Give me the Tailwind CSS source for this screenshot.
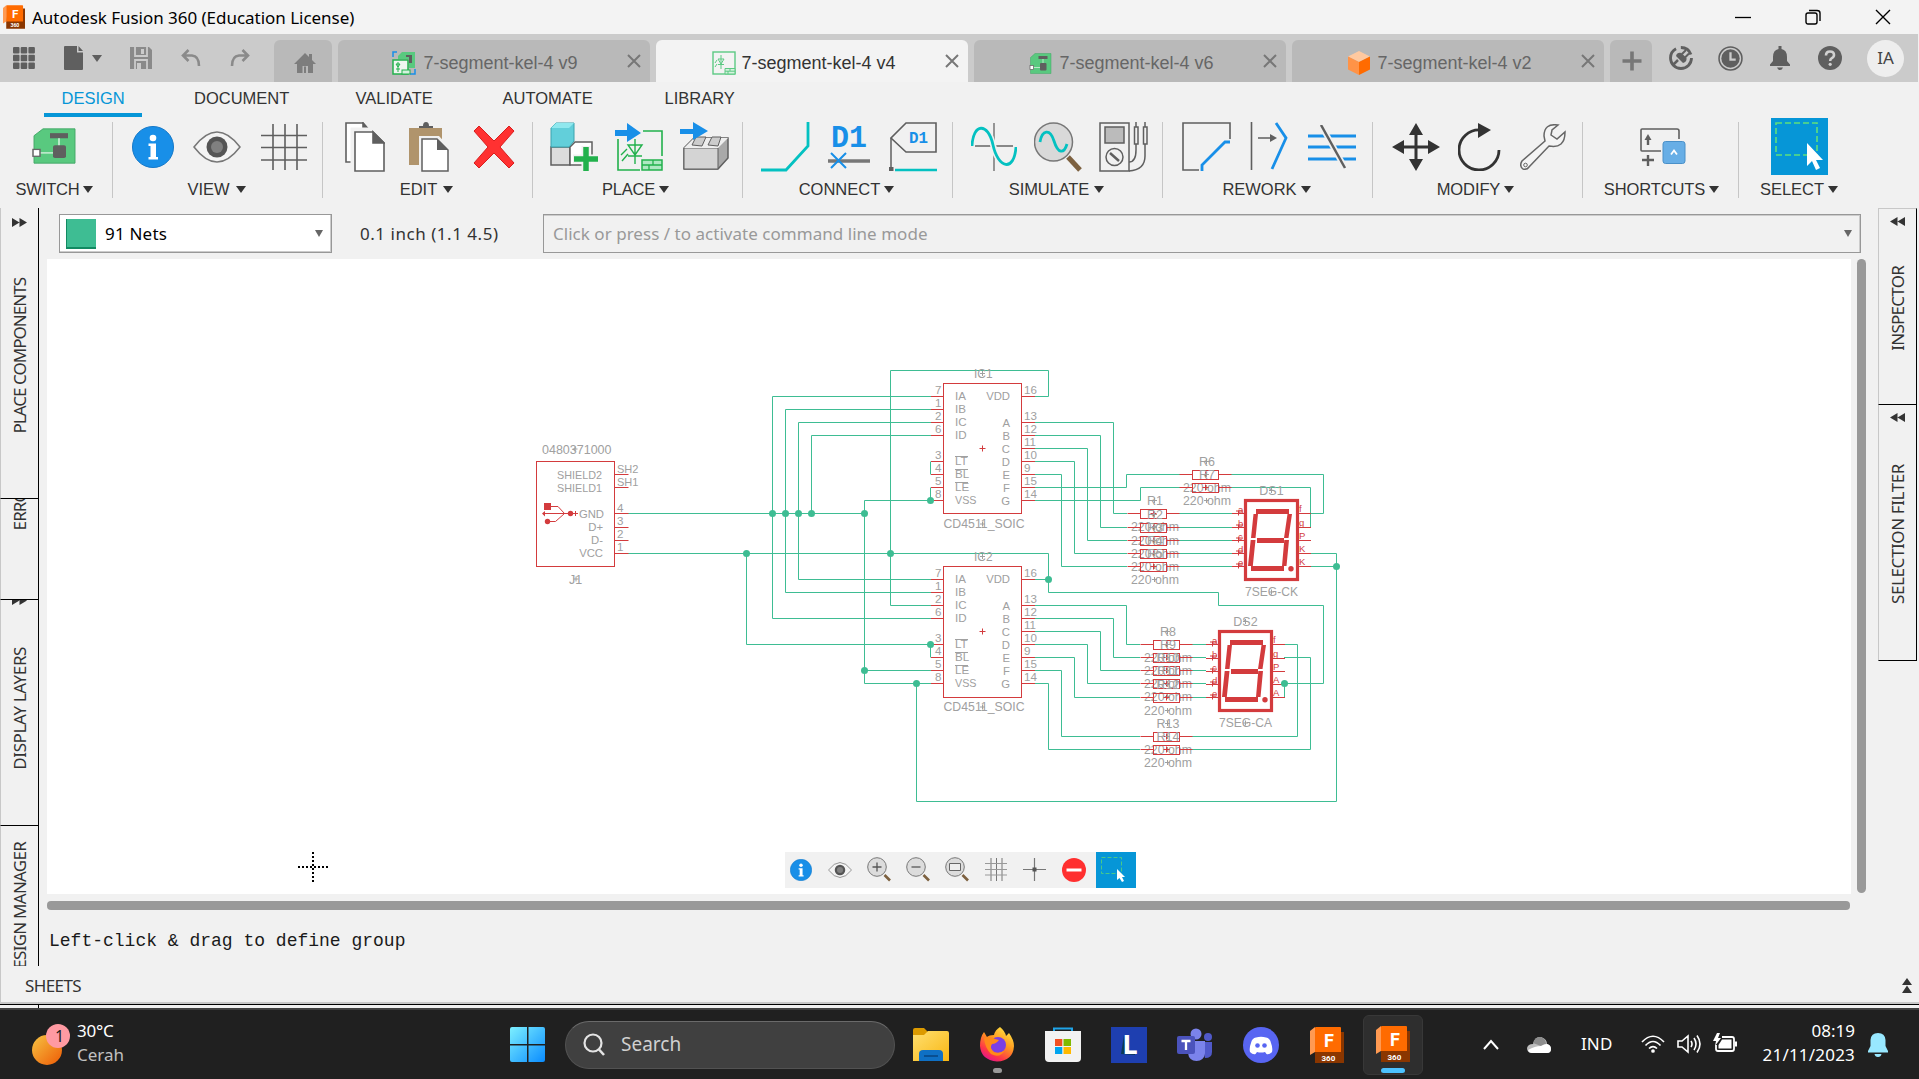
<!DOCTYPE html>
<html lang="en">
<head>
<meta charset="utf-8">
<title>Autodesk Fusion 360 (Education License)</title>
<script src="https://cdn.jsdelivr.net/npm/@tailwindcss/browser@4"></script>
</head>
<body class="w-[1919px] h-[1079px] overflow-hidden bg-[#f1f1f1] font-['Noto_Sans',sans-serif] text-[#333] flex flex-col">

<svg class="absolute w-0 h-0">
  <defs>
    <linearGradient id="winG" x1="0" y1="0" x2="1" y2="1"><stop offset="0" stop-color="#7df0ff"/><stop offset="1" stop-color="#0a8cff"/></linearGradient>
    <linearGradient id="sunG" x1="0" y1="0" x2="1" y2="1"><stop offset="0" stop-color="#f6c443"/><stop offset="1" stop-color="#ee5a05"/></linearGradient>
    <linearGradient id="folG" x1="0" y1="0" x2="1" y2="1"><stop offset="0" stop-color="#ffdf70"/><stop offset="1" stop-color="#f9b713"/></linearGradient>
    <linearGradient id="foxG" x1="0.9" y1="0" x2="0.3" y2="1"><stop offset="0" stop-color="#fff04a"/><stop offset=".45" stop-color="#ff9a1f"/><stop offset=".8" stop-color="#ff3647"/><stop offset="1" stop-color="#e3158c"/></linearGradient>
  </defs>
  <symbol id="fusion" viewBox="0 0 34 36">
    <path d="M8 5H34V36H5V26z" fill="#8a3600"/><path d="M0 4L5 0V25L0 28z" fill="#ff9a52"/><path d="M5 1Q5 0 6 0H30Q31 0 31 1V25H5z" fill="#ff6b00"/>
    <text x="14" y="20" font-family="Roboto" font-weight="700" font-size="18" fill="#fff">F</text>
    <text x="11.500" y="33.500" font-family="Roboto" font-weight="700" font-size="8" fill="#fff">360</text>
  </symbol>
  <symbol id="board" viewBox="0 0 44 42">
    <path d="M2 9L11 1H43V41H2z" fill="#59c97f" stroke="#43a667"/><path d="M18 6H36V12H18z" fill="#5f5f5f"/><path d="M27 12V22M8 29H22" stroke="#b8e8c8" stroke-width="2"/><rect x="21" y="20" width="13" height="15" rx="2" fill="#5f5f5f"/><rect x="1" y="25" width="7" height="8" fill="#fff" stroke="#666" stroke-width="1.500"/>
  </symbol>
  <symbol id="sch" viewBox="0 0 24 24">
    <rect x="1" y="1" width="22" height="22" fill="none" stroke="#5cc983" stroke-width="1.400"/><path d="M9 4V18M6 8H12L9 13zM6 13.500H12M5 9L3 12M5 13L3 16" stroke="#5cc983" fill="none"/><path d="M13 17.500H23V23H13z" fill="#d5f2de" stroke="#5cc983"/><path d="M13 20.200H23M18 17V20M16 20V23" stroke="#5cc983"/>
  </symbol>
  <symbol id="eye" viewBox="0 0 48 32">
    <path d="M1 16Q24 -14 47 16Q24 46 1 16z" fill="#f4f4f4" stroke="#777" stroke-width="1.500"/><circle cx="24" cy="16" r="10.500" fill="#555"/><circle cx="24" cy="16" r="6" fill="#808080"/>
  </symbol>
  <symbol id="grid3" viewBox="0 0 46 46">
    <path d="M12 0V46M24 0V46M36 0V46M0 11.500H46M0 23.500H46M0 36H46" stroke="#5f5f5f" stroke-width="1.600"/>
  </symbol>
  <symbol id="lens" viewBox="0 0 24 25">
    <path d="M17.500 18L23 23.500" stroke="#7d6140" stroke-width="2.600"/><circle cx="10" cy="10" r="9.300" fill="#dcdcdc" stroke="#777"/>
  </symbol>
  <symbol id="info" viewBox="0 0 42 42">
    <circle cx="21" cy="21" r="20.500" fill="#188fe8" stroke="#1478c8"/><circle cx="21" cy="12" r="3.300" fill="#fff"/><path d="M16.500 17.500H24V31H26V33.500H16.500V31H18.500V20H16.500z" fill="#fff"/>
  </symbol>
  <symbol id="x" viewBox="0 0 14 14"><path d="M1 1L13 13M13 1L1 13" stroke="#777" stroke-width="2"/></symbol>
  <symbol id="dn" viewBox="0 0 10 7"><path d="M0 0H10L5 7z" fill="currentColor"/></symbol>
  <symbol id="ff" viewBox="0 0 15 9"><path d="M0 0L7.500 4.500L0 9zM7.500 0L15 4.500L7.500 9z" fill="#333"/></symbol>
</svg>

<!-- title bar -->
<header class="h-[34px] shrink-0 bg-[#f3f3f3] flex items-center pl-[3px] text-black">
  <svg class="w-[22px] h-6"><use href="#fusion"/></svg>
  <span class="ml-[7px] text-[17px] leading-none tracking-[-0.03px]">Autodesk Fusion 360 (Education License)</span>
  <div class="ml-auto flex items-center gap-[54px] pr-[28px]">
    <svg class="w-4 h-4" viewBox="0 0 16 16"><path d="M0 8.500H16" stroke="#000" stroke-width="1.300"/></svg>
    <svg class="w-4 h-4" viewBox="0 0 16 16" fill="none" stroke="#000" stroke-width="1.400"><rect x="1" y="4" width="11" height="11" rx="2"/><path d="M4 1.500H12Q15 1.500 15 4V12"/></svg>
    <svg class="w-4 h-4" viewBox="0 0 16 16"><path d="M1 1L15 15M15 1L1 15" stroke="#000" stroke-width="1.400"/></svg>
  </div>
</header>

<!-- document tabs -->
<div class="h-12 shrink-0 w-[1918px] bg-[#cbcbcb] flex items-end text-[18px] text-[#666] font-['Liberation_Sans',sans-serif]">
  <div class="w-[273.500px] h-full flex items-center pl-[13px]">
    <svg class="w-[22px] h-[22px]" viewBox="0 0 22 22" fill="#5f5f5f"><rect width="6.500" height="6.500" rx="1"/><rect x="7.700" width="6.500" height="6.500" rx="1"/><rect x="15.400" width="6.500" height="6.500" rx="1"/><rect y="7.700" width="6.500" height="6.500" rx="1"/><rect x="7.700" y="7.700" width="6.500" height="6.500" rx="1"/><rect x="15.400" y="7.700" width="6.500" height="6.500" rx="1"/><rect y="15.400" width="6.500" height="6.500" rx="1"/><rect x="7.700" y="15.400" width="6.500" height="6.500" rx="1"/><rect x="15.400" y="15.400" width="6.500" height="6.500" rx="1"/></svg>
    <svg class="w-5 h-6 ml-[29px]" viewBox="0 0 20 24"><path d="M0 1Q0 0 1 0H13V6.500H19V23Q19 24 18 24H1Q0 24 0 23zM14.500 0L19 5H14.500z" fill="#5f5f5f"/></svg>
    <svg class="w-2.5 h-[7px] ml-2 text-[#5f5f5f]"><use href="#dn"/></svg>
    <svg class="w-[22px] h-[22px] ml-7" viewBox="0 0 22 22"><path d="M0 0H19L22 3V22H0z" fill="#8a8a8a"/><path d="M5 0V9H17V0M5 22V13H17V22" fill="none" stroke="#cbcbcb" stroke-width="1.800"/><path d="M11 2H14V7H11zM7 16H11V22H7z" fill="#cbcbcb"/></svg>
    <svg class="w-5 h-[18px] ml-[29px]" viewBox="0 0 20 18" fill="none" stroke="#8a8a8a" stroke-width="2.600"><path d="M7.500 1L2 6.500L7.500 12M2 6.500H11Q18 7 18 17"/></svg>
    <svg class="w-5 h-[18px] ml-[29px]" viewBox="0 0 20 18" fill="none" stroke="#8a8a8a" stroke-width="2.600"><path d="M12.500 1L18 6.500L12.500 12M18 6.500H9Q2 7 2 17"/></svg>
  </div>
  <div class="w-[58px] h-[42px] bg-[#b9b9b9] rounded-t-md flex items-center justify-center pl-1 pt-1">
    <svg class="w-[22px] h-5" viewBox="0 0 22 20"><path d="M0 11L11 0L15 4V1H18V7L22 11H19V20H14V13H8.500V20H3V11z" fill="#7d7d7d"/><path d="M10 13.500H12V20H10z" fill="#7d7d7d"/></svg>
  </div>
  <div class="w-[312px] h-[42px] ml-[6px] bg-[#b9b9b9] rounded-t-md flex items-center pl-[54px] pt-1">
    <svg class="w-6 h-6" viewBox="0 0 24 24"><path d="M6 5L10 1H23V17H17V8H6z" fill="#59c97f"/><path d="M14 4H20V12H17V6H14z" fill="#5f5f5f"/><path d="M1 6V1H5M18 23H23V18" stroke="#188fe8" stroke-width="1.500" fill="none"/><rect x="1" y="9" width="15" height="14" fill="#eef6f0" stroke="#22b14c" stroke-width="1.500"/><path d="M6 11V21M4 13H8L6 16zM4 18H8" stroke="#22b14c" fill="none"/><rect x="10" y="19" width="8" height="4" fill="#d5f2de" stroke="#22b14c"/></svg>
    <span class="ml-[8px] w-[203px]">7-segment-kel-4 v9</span><svg class="w-3.5 h-3.5 mb-1"><use href="#x"/></svg>
  </div>
  <div class="w-[312px] h-[42px] ml-[6px] bg-[#f3f3f3] text-[#333] rounded-t-md flex items-center pl-[56px] pt-1">
    <svg class="w-6 h-6"><use href="#sch"/></svg>
    <span class="ml-[6px] w-[203px]">7-segment-kel-4 v4</span><svg class="w-3.5 h-3.5 mb-1"><use href="#x"/></svg>
  </div>
  <div class="w-[312px] h-[42px] ml-[6px] bg-[#b9b9b9] rounded-t-md flex items-center pl-[55px] pt-1">
    <svg class="w-[23px] h-[21px]"><use href="#board"/></svg>
    <span class="ml-[8px] w-[203px]">7-segment-kel-4 v6</span><svg class="w-3.5 h-3.5 mb-1"><use href="#x"/></svg>
  </div>
  <div class="w-[312px] h-[42px] ml-[6px] bg-[#b9b9b9] rounded-t-md flex items-center pl-[56px] pt-1">
    <svg class="w-[22px] h-6" viewBox="0 0 22 24"><path d="M11 0L22 5.500L11 11L0 5.500z" fill="#ffc9a0"/><path d="M0 5.500L11 11V24L0 18.500z" fill="#ff9347"/><path d="M22 5.500L11 11V24L22 18.500z" fill="#ff6b00"/></svg>
    <span class="ml-[8px] w-[203px]">7-segment-kel-4 v2</span><svg class="w-3.5 h-3.5 mb-1"><use href="#x"/></svg>
  </div>
  <div class="w-[42px] h-[42px] ml-[6px] bg-[#b9b9b9] rounded-t-md flex items-center justify-center pl-0.5">
    <svg class="w-5 h-5" viewBox="0 0 20 20"><path d="M10 0.500V19.500M0.500 10H19.500" stroke="#777" stroke-width="3.600"/></svg>
  </div>
  <div class="h-full flex items-center ml-[17.500px] gap-[25px]">
    <svg class="w-6 h-6" viewBox="0 0 24 24"><circle cx="12" cy="12" r="10.500" fill="none" stroke="#5f5f5f" stroke-width="2.800" stroke-dasharray="44 5 13 4"/><path d="M4 19L9 14" stroke="#5f5f5f" stroke-width="2.500"/><path d="M7 10L14 17Q18 16 17.500 12L12.500 7Q8 6 7 10z" fill="#5f5f5f"/><path d="M13 8L17 4M16 11.500L20 7.500" stroke="#5f5f5f" stroke-width="2"/></svg>
    <svg class="w-[25px] h-[25px]" viewBox="0 0 24 24"><circle cx="12" cy="12" r="11" fill="none" stroke="#5f5f5f" stroke-width="1.500"/><circle cx="12" cy="12" r="8.800" fill="#5f5f5f"/><path d="M12 6V13H17" stroke="#cbcbcb" stroke-width="2.200" fill="none"/></svg>
    <svg class="w-6 h-6" viewBox="0 0 24 24" fill="#5f5f5f"><path d="M10.500 0H13.500V3Q19 4 19 11V15L22 18.500V20H2V18.500L5 15V11Q5 4 10.500 3zM9 21.500H15Q14 24 12 24T9 21.500z"/></svg>
    <svg class="w-6 h-6 ml-px" viewBox="0 0 24 24"><circle cx="12" cy="12" r="12" fill="#5f5f5f"/><path d="M8 9.500Q8 5.500 12 5.500T16 9Q16 11 13.500 12.300Q12.200 13 12.200 15" stroke="#d2d2d2" stroke-width="2.600" fill="none"/><circle cx="12.200" cy="18.300" r="1.600" fill="#d2d2d2"/></svg>
    <div class="w-[37px] h-[37px] rounded-full bg-[#eeeeee] text-[#444] text-[17px] flex items-center justify-center font-['Noto_Sans',sans-serif]">IA</div>
  </div>
</div>

<!-- workspace menu -->
<nav class="h-[35px] shrink-0 flex text-[16.5px] font-['Liberation_Sans',sans-serif] pl-11 leading-[33px]">
  <div class="w-[98px] pl-[17.500px] text-[#0696d7] border-b-4 border-[#0696d7]">DESIGN</div>
  <div class="w-[162px] pl-[52px]">DOCUMENT</div>
  <div class="w-[146px] pl-[51.500px]">VALIDATE</div>
  <div class="w-[163px] pl-[52.500px]">AUTOMATE</div>
  <div class="pl-[51.500px]">LIBRARY</div>
</nav>

<!-- toolbar ribbon -->
<div class="h-[91px] shrink-0 flex pt-[1px] text-[16.5px] font-['Liberation_Sans',sans-serif] leading-none">
  <section class="w-[112px] flex flex-col items-center">
    <div class="h-[57px] flex items-center pb-px pr-1"><svg class="w-[44px] h-[36px]" viewBox="0 0 44 42" preserveAspectRatio="none"><use href="#board" width="44" height="42"/></svg></div>
    <div class="flex items-center gap-1 mt-[6px] pr-[3px] tracking-[-0.2px]">SWITCH<svg class="w-2.5 h-[7px]"><use href="#dn"/></svg></div>
  </section>
  <i class="w-px h-[76px] mt-1 bg-[#c6c6c6]"></i>
  <section class="w-[209px] flex flex-col items-center">
    <div class="h-[57px] flex items-center justify-around w-[194px] ml-1">
      <svg class="w-[42px] h-[42px]"><use href="#info"/></svg>
      <svg class="w-[48px] h-8"><use href="#eye"/></svg>
      <svg class="w-[46px] h-[46px]"><use href="#grid3"/></svg>
    </div>
    <div class="flex items-center gap-1.5 mt-[6px] pr-0.5">VIEW<svg class="w-2.5 h-[7px]"><use href="#dn"/></svg></div>
  </section>
  <i class="w-px h-[76px] mt-1 bg-[#c6c6c6]"></i>
  <section class="w-[209px] flex flex-col items-center">
    <div class="h-[57px] flex items-center justify-around w-[194px] ml-1">
      <svg class="w-[40px] h-[50px]" viewBox="0 0 40 50" fill="#fff" stroke="#5f5f5f" stroke-width="1.600"><path d="M1 1H18L24 8V40H1z"/><path d="M18 1V8H24z" fill="#5f5f5f"/><path d="M8 8H28L39 21V49H8z" stroke="#f1f1f1" stroke-width="5"/><path d="M10 10H28L39 21V49H10z"/><path d="M28 10V21H39z" fill="#5f5f5f"/></svg>
      <svg class="w-[40px] h-[50px]" viewBox="0 0 40 50"><path d="M0 6H33V43H0z" fill="#b0946c"/><path d="M10 6V4H14Q14 0 17 0T20 4H24V6z" fill="#5f5f5f"/><path d="M10 14H30L40 25V50H10z" fill="#f1f1f1"/><path d="M13 17H28L39 28V49H13z" fill="#fff" stroke="#5f5f5f" stroke-width="1.500"/><path d="M28 17V28H39z" fill="#5f5f5f"/></svg>
      <svg class="w-[42px] h-[44px]" viewBox="0 0 42 44"><path d="M6 1L21 16L36 1L41 6L27 22L41 38L36 43L21 28L6 43L1 38L15 22L1 6z" fill="#ff3131" stroke="#d81e1e"/></svg>
    </div>
    <div class="flex items-center gap-1.5 mt-[6px] pr-0.5">EDIT<svg class="w-2.5 h-[7px]"><use href="#dn"/></svg></div>
  </section>
  <i class="w-px h-[76px] mt-1 bg-[#c6c6c6]"></i>
  <section class="w-[209px] flex flex-col items-center">
    <div class="h-[57px] flex items-center justify-around w-[194px] ml-1">
      <svg class="w-[49px] h-[50px]" viewBox="0 0 49 50"><path d="M1 25H20V43H1z" fill="#dcdcdc" stroke="#5f5f5f" stroke-width="1.500"/><path d="M20 25L25 20H42V38L37 43H20z" fill="#fff" stroke="#5f5f5f" stroke-width="1.500"/><path d="M1 6L6 1H24V19L19 25H1z" fill="#62cfda" stroke="#3aa3ae"/><path d="M1 6L6 1H24L19 6z" fill="#90e8ee"/><path d="M36 24V50M23 37H49" stroke="#f1f1f1" stroke-width="9"/><path d="M36 25V49M24 37H48" stroke="#22b14c" stroke-width="5.500"/></svg>
      <svg class="w-[49px] h-[50px]" viewBox="0 0 49 50"><path d="M3 17V48H25M28 9H47V34" stroke="#22b14c" stroke-width="1.600" fill="none"/><path d="M20 17V42M13 23H27L20 33zM13 34H27M6 33L12 27M7 39L13 32" stroke="#22b14c" stroke-width="1.400" fill="none"/><rect x="27" y="38" width="20" height="10" fill="#aee8c2" stroke="#22b14c" stroke-width="1.500"/><path d="M27 43H47M38 38V43M34 43V48" stroke="#22b14c" stroke-width="1.300"/><path d="M0 8H12V1L26 11L12 20V14H0z" fill="#188fe8"/></svg>
      <svg class="w-[49px] h-[50px]" viewBox="0 0 49 50"><path d="M4 26L14 16H48V36L38 47H4z" fill="#a9a9a9" stroke="#5f5f5f" stroke-width="1.500"/><path d="M4 26H38V47H4z" fill="#d4d4d4" stroke="#5f5f5f" stroke-width="1"/><path d="M38 26L48 16H14L4 26z" fill="#eee"/><path d="M12 23L16 15H26L22 24zM28 23L32 15H41L38 24z" fill="#ccc" stroke="#5f5f5f"/><path d="M0 7H13V0L28 9L13 18V12H0z" fill="#188fe8"/></svg>
    </div>
    <div class="flex items-center gap-1 mt-[6px] pr-1 tracking-[-0.2px]">PLACE<svg class="w-2.5 h-[7px]"><use href="#dn"/></svg></div>
  </section>
  <i class="w-px h-[76px] mt-1 bg-[#c6c6c6]"></i>
  <section class="w-[209px] flex flex-col items-center">
    <div class="h-[57px] flex items-center justify-around w-[194px] ml-1">
      <svg class="w-[49px] h-[50px]" viewBox="0 0 49 50"><path d="M0 48H25L47 24V0" stroke="#04c1c1" stroke-width="2.800" fill="none"/></svg>
      <svg class="w-[43px] h-[50px]" viewBox="0 0 43 50"><text x="3" y="25" textLength="36" lengthAdjust="spacingAndGlyphs" font-family="Liberation Mono" font-weight="700" font-size="31" fill="#188fe8">D1</text><path d="M0 39H42" stroke="#777" stroke-width="3.500"/><path d="M3 31L18 46M18 31L3 46" stroke="#188fe8" stroke-width="2"/></svg>
      <svg class="w-[49px] h-[50px]" viewBox="0 0 49 50"><path d="M17 1H47V30H17L2 16z" fill="#f1f1f1" stroke="#5f5f5f" stroke-width="1.600"/><path d="M2 16V45" stroke="#5f5f5f" stroke-width="1.500"/><path d="M0 45H4.500V49H0z" fill="#5f5f5f"/><path d="M6 48H48" stroke="#04c1c1" stroke-width="2.600"/><text x="20" y="21" textLength="19" lengthAdjust="spacingAndGlyphs" font-family="Liberation Mono" font-weight="700" font-size="17" fill="#188fe8">D1</text></svg>
    </div>
    <div class="flex items-center gap-1 mt-[6px] pr-0.5">CONNECT<svg class="w-2.5 h-[7px]"><use href="#dn"/></svg></div>
  </section>
  <i class="w-px h-[76px] mt-1 bg-[#c6c6c6]"></i>
  <section class="w-[209px] flex flex-col items-center">
    <div class="h-[57px] flex items-center justify-around w-[194px] ml-1">
      <svg class="w-[46px] h-[48px]" viewBox="0 0 46 48" fill="none"><path d="M23 0V48M4 23H42" stroke="#666" stroke-width="1.300"/><path d="M1 23C2 0 17 -1 22 22S43 50 45 24" stroke="#f1f1f1" stroke-width="6"/><path d="M1 23C2 0 17 -1 22 22S43 50 45 24" stroke="#04c1c1" stroke-width="2.800"/></svg>
      <svg class="w-[48px] h-[50px]" viewBox="0 0 48 50"><path d="M34 35L46 48" stroke="#7d6140" stroke-width="5"/><circle cx="19.500" cy="20" r="19" fill="#d9d9d9" stroke="#777" stroke-width="1.500"/><path d="M6 20C8 8 16 6 20 19S30 32 33 22" stroke="#04c1c1" stroke-width="2.800" fill="none"/></svg>
      <svg class="w-[49px] h-[50px]" viewBox="0 0 49 50" fill="none" stroke="#5f5f5f" stroke-width="1.500"><rect x="1" y="1" width="29" height="48"/><rect x="6" y="5" width="19" height="16" fill="#bbb"/><circle cx="15.500" cy="35" r="8.500"/><path d="M11 31L20 39" stroke-width="2.500"/><path d="M37 0V5M46 0V5M35.500 5H39V22H35.500zM44.500 5H48V22H44.500zM37 22V28Q37 40 30 40M46 22V34Q46 48 30 49"/></svg>
    </div>
    <div class="flex items-center gap-[5px] mt-[6px] pr-0.5 tracking-[-0.1px]">SIMULATE<svg class="w-2.5 h-[7px]"><use href="#dn"/></svg></div>
  </section>
  <i class="w-px h-[76px] mt-1 bg-[#c6c6c6]"></i>
  <section class="w-[209px] flex flex-col items-center">
    <div class="h-[57px] flex items-center justify-around w-[194px] ml-1">
      <svg class="w-[49px] h-[50px]" viewBox="0 0 49 50" fill="none"><path d="M17 48H1V1H48V17" stroke="#5f5f5f" stroke-width="1.600"/><path d="M20 49V43L43 20H48" stroke="#188fe8" stroke-width="2.800"/></svg>
      <svg class="w-[38px] h-[50px]" viewBox="0 0 38 50" fill="none"><path d="M1.500 0V48M8 16H24" stroke="#5f5f5f" stroke-width="1.600"/><path d="M20 12L27 16L20 20z" fill="#5f5f5f"/><path d="M26 1L36 16L22 47" stroke="#188fe8" stroke-width="2.800"/></svg>
      <svg class="w-[49px] h-[44px]" viewBox="0 0 49 44"><path d="M0 11H48M0 22H48M0 34H48" stroke="#188fe8" stroke-width="2.800"/><path d="M13 0L37 43" stroke="#f1f1f1" stroke-width="6"/><path d="M13 0L37 43" stroke="#5f5f5f" stroke-width="2.500"/></svg>
    </div>
    <div class="flex items-center gap-1 mt-[6px] pr-0.5">REWORK<svg class="w-2.5 h-[7px]"><use href="#dn"/></svg></div>
  </section>
  <i class="w-px h-[76px] mt-1 bg-[#c6c6c6]"></i>
  <section class="w-[209px] flex flex-col items-center">
    <div class="h-[57px] flex items-center justify-around w-[194px] ml-1">
      <svg class="w-[48px] h-[48px]" viewBox="0 0 48 48"><path d="M24 6V42M6 24H42" stroke="#333" stroke-width="3"/><path d="M24 0L31 12H17zM24 48L31 36H17zM0 24L12 17V31zM48 24L36 17V31z" fill="#333"/></svg>
      <svg class="w-[43px] h-[48px]" viewBox="0 0 43 48"><path d="M22 7A20 20 0 1 0 41 27" fill="none" stroke="#333" stroke-width="2.800"/><path d="M20 0L33 7L20 15z" fill="#333"/></svg>
      <svg class="w-[47px] h-[46px]" viewBox="0 0 47 46"><path d="M38 1Q24 -1 24 12L25 17L2 37Q-1 42 3 45Q7 46 9 43L29 22Q45 25 45 8L37 15L31 11L32 6z" fill="#f4f4f4" stroke="#666" stroke-width="1.500"/><circle cx="5.500" cy="41" r="1.800" fill="none" stroke="#666"/></svg>
    </div>
    <div class="flex items-center gap-1 mt-[6px] pr-1 tracking-[-0.1px]">MODIFY<svg class="w-2.5 h-[7px]"><use href="#dn"/></svg></div>
  </section>
  <i class="w-px h-[76px] mt-1 bg-[#c6c6c6]"></i>
  <section class="w-[155px] flex flex-col items-center">
    <div class="h-[57px] flex items-center pl-1"><svg class="w-[46px] h-[38px]" viewBox="0 0 46 38"><path d="M21 23H2Q1 23 1 22V2Q1 1 2 1H37Q39 1 39 3V11" fill="none" stroke="#5f5f5f" stroke-width="1.600"/><path d="M8 17V10M2 32H14M8 27V38" stroke="#5f5f5f" stroke-width="2.400"/><path d="M4.500 12L8 6L11.500 12z" fill="#5f5f5f"/><rect x="23" y="13.500" width="22" height="22" rx="2.500" fill="#67aee6" stroke="#4a90c8"/><path d="M31 26.500L34 22.500L37 26.500" stroke="#fff" stroke-width="1.800" fill="none"/></svg></div>
    <div class="flex items-center gap-1 mt-[6px] pl-0.5 tracking-[-0.1px]">SHORTCUTS<svg class="w-2.5 h-[7px]"><use href="#dn"/></svg></div>
  </section>
  <i class="w-px h-[76px] mt-1 bg-[#c6c6c6]"></i>
  <section class="w-[120px] flex flex-col items-center">
    <svg class="w-[57px] h-[57px]" viewBox="0 0 57 57"><rect width="57" height="57" fill="#0696d7"/><path d="M5 5H46V37H5z" fill="none" stroke="#5fe07c" stroke-width="1.600" stroke-dasharray="6 3"/><path d="M36 25V48L41 43L45 52L49 50L45 42H52z" fill="#fff"/></svg>
    <div class="flex items-center gap-1 mt-[6px]">SELECT<svg class="w-2.5 h-[7px]"><use href="#dn"/></svg></div>
  </section>
</div>

<!-- editor area -->
<main class="h-[758px] shrink-0 flex">
  <aside class="w-[39px] border-r border-black flex flex-col text-[17px] leading-none whitespace-nowrap">
    <div class="h-[291px] border-b border-black pt-2.5 flex flex-col items-center border-l border-l-[#c8c8c8]">
      <svg class="w-[15px] h-[9px] shrink-0"><use href="#ff"/></svg>
      <span class="[writing-mode:vertical-rl] rotate-180 mt-[51px] tracking-[-0.97px]">PLACE COMPONENTS</span>
    </div>
    <div class="h-[101px] border-b border-black flex flex-col items-center justify-end overflow-hidden border-l border-l-[#c8c8c8] pb-[69px]">
      <span class="[writing-mode:vertical-rl] rotate-180 tracking-[-0.9px]">ERRORS</span>
    </div>
    <div class="h-[226px] border-b border-black flex flex-col items-center border-l border-l-[#c8c8c8] overflow-hidden">
      <svg class="w-[15px] h-[9px] shrink-0 -mt-[4px]"><use href="#ff"/></svg>
      <span class="[writing-mode:vertical-rl] rotate-180 mt-[42px] tracking-[-0.4px]">DISPLAY LAYERS</span>
    </div>
    <div class="h-[140px] flex flex-col items-center border-l border-l-[#c8c8c8] overflow-hidden pt-[16px]">
      <span class="[writing-mode:vertical-rl] rotate-180 tracking-[-0.75px] shrink-0">DESIGN MANAGER</span>
    </div>
  </aside>

  <div class="w-[1839px] pl-2 flex flex-col">
    <div class="h-[51px] flex items-start pt-[6px] pl-3 text-[17px]">
      <div class="w-[273px] h-[39px] bg-white border border-[#989898] shadow-[inset_-1px_-1px_0_#ccc] flex items-center pl-[6px] text-black">
        <i class="w-[30px] h-[30px] bg-[#3ebd93] border-b-2 border-l border-[#128a62]"></i>
        <span class="ml-[9px] tracking-[0.2px]">91 Nets</span>
        <svg class="w-2 h-[7px] ml-auto mr-2 text-[#666]" viewBox="0 0 8 7"><path d="M0 0H8L4 7z" fill="currentColor"/></svg>
      </div>
      <span class="ml-7 w-[183px] leading-[39px] tracking-[0.53px]">0.1 inch (1.1 4.5)</span>
      <div class="w-[1318px] h-[39px] border border-[#989898] shadow-[inset_0_1px_0_#ccc,inset_-1px_0_0_#ccc] flex items-center pl-[9px] text-[#999]">
        <span class="tracking-[0.03px]">Click or press / to activate command line mode</span>
        <svg class="w-2 h-[7px] ml-auto mr-2 text-[#666]" viewBox="0 0 8 7"><path d="M0 0H8L4 7z" fill="currentColor"/></svg>
      </div>
    </div>
    <div class="flex h-[635px]">
      <div class="relative w-[1804px] h-[635px] bg-white">
        <svg id="sheet" class="block w-[1804px] h-[635px]" viewBox="47 259 1804 635" font-family="Liberation Sans, sans-serif"></svg>
        <div class="absolute left-[738px] top-[593px] w-[351px] h-9 bg-[#f1f1f1] flex items-center pl-[5px]">
          <svg class="w-[22px] h-[22px] mb-px"><use href="#info"/></svg>
          <svg class="w-6 h-4 ml-4 mb-px"><use href="#eye"/></svg>
          <svg class="w-6 h-[25px] ml-[15px] mb-px" viewBox="0 0 24 25"><use href="#lens"/><path d="M5.500 10H14.500M10 5.500V14.500" stroke="#555" stroke-width="1.300"/></svg>
          <svg class="w-6 h-[25px] ml-[15px] mb-px" viewBox="0 0 24 25"><use href="#lens"/><path d="M5.500 10H14.500" stroke="#555" stroke-width="1.300"/></svg>
          <svg class="w-6 h-[25px] ml-[15px] mb-px" viewBox="0 0 24 25"><use href="#lens"/><path d="M4.500 6.500H15.500V13.500H4.500z" fill="#eee" stroke="#666"/></svg>
          <svg class="w-[22px] h-[23px] ml-4 mb-px" viewBox="0 0 22 23"><path d="M6 0V23M11.500 0V23M17 0V23" stroke="#777"/><path d="M0 5.500H22M0 11.500H22M0 17H22" stroke="#999"/></svg>
          <svg class="w-[23px] h-[23px] ml-4 mb-px" viewBox="0 0 23 23"><path d="M11.500 0V23M0 11.500H23" stroke="#777" stroke-width="1.200"/><rect x="9.500" y="9.500" width="4" height="4" fill="#555"/></svg>
          <svg class="w-6 h-6 ml-4 mb-px" viewBox="0 0 24 24"><circle cx="12" cy="12" r="12" fill="#ff2f2f"/><path d="M4.500 12H19.500" stroke="#fff" stroke-width="3"/></svg>
          <svg class="w-10 h-9 ml-2.5" viewBox="0 0 40 36"><rect width="40" height="36" fill="#0696d7"/><path d="M5.500 5.500H25.500V21.500H5.500z" fill="none" stroke="#48c98a" stroke-dasharray="4 2"/><path d="M21 17V28L23.500 26L26 30L28 29L26 25H29z" fill="#fff"/></svg>
        </div>
      </div>
      <i class="w-[9px] h-[634px] ml-[6px] bg-[#999] rounded-full"></i>
    </div>
    <i class="w-[1803px] h-[9px] mt-[7px] bg-[#999] rounded shrink-0"></i>
    <div class="mt-[20px] ml-[2px] text-[18px] leading-[22px] text-[#1a1a1a] font-['Liberation_Mono',monospace]">Left-click &amp; drag to define group</div>
  </div>

  <aside class="w-[39px] text-[17px] leading-none whitespace-nowrap">
    <div class="h-[197px] border-l border-t border-[#c8c8c8] border-b border-b-black border-r border-r-black pt-2 flex flex-col items-center">
      <svg class="w-[15px] h-[9px] shrink-0 rotate-180"><use href="#ff"/></svg>
      <span class="[writing-mode:vertical-rl] rotate-180 mt-[40px] tracking-[-0.75px]">INSPECTOR</span>
    </div>
    <div class="h-[256px] border-l border-[#c8c8c8] border-b border-b-black border-r border-r-black pt-[8px] flex flex-col items-center">
      <svg class="w-[15px] h-[9px] shrink-0 rotate-180"><use href="#ff"/></svg>
      <span class="[writing-mode:vertical-rl] rotate-180 mt-[42px] tracking-[-0.4px]">SELECTION FILTER</span>
    </div>
  </aside>
</main>

<div class="h-[36px] shrink-0 flex items-center pl-6 pr-[7px] text-[17px] border-l border-[#c8c8c8]">
  <span class="tracking-[-0.6px] pt-[3px]">SHEETS</span>
  <svg class="w-2.5 h-[15px] ml-auto mt-0.5" viewBox="0 0 10 15"><path d="M5 0L10 7H0zM5 7.500L10 15H0z" fill="#333"/></svg>
</div>
<div class="h-[6px] shrink-0 border-t-2 border-[#c8c8c8] flex flex-col"><i class="h-px bg-black"></i><i class="w-[39px] h-[3px] border-r border-black"></i></div>

<!-- taskbar -->
<footer class="h-[71px] shrink-0 bg-[#202020] border-t-2 border-[#404040] flex items-center text-[17px] text-white pl-8">
  <svg class="w-[40px] h-[44px] mb-0.5" viewBox="0 0 40 44"><circle cx="15" cy="28" r="15" fill="url(#sunG)"/><circle cx="26" cy="14" r="12" fill="#ff9aa2"/><text x="23" y="20" font-size="16" fill="#222" font-family="Noto Sans">1</text></svg>
  <div class="ml-[5px] w-[433px] leading-6 pb-[3px]"><div class="tracking-[-0.2px]">30°C</div><div class="text-[#c0c0c0]">Cerah</div></div>
  <svg class="w-[35px] h-[35px]" viewBox="0 0 35 35"><path d="M2 0H17V17H0V2Q0 0 2 0zM18.500 0H33Q35 0 35 2V17H18.500zM0 18.500H17V35H2Q0 35 0 33zM18.500 18.500H35V33Q35 35 33 35H18.500z" fill="url(#winG)"/></svg>
  <div class="w-[330px] h-12 ml-5 rounded-full bg-[#404040] border border-[#525252] border-t-[#6a6a6a] flex items-center pl-[17px] text-[#d0d0d0]">
    <svg class="w-[22px] h-[23px]" viewBox="0 0 22 23"><circle cx="10" cy="10" r="8.500" fill="none" stroke="#e4e4e4" stroke-width="2.200"/><path d="M16 16.500L21 22" stroke="#e4e4e4" stroke-width="2.600"/></svg>
    <span class="ml-[16px] text-[19px] pb-px">Search</span>
  </div>
  <svg class="w-9 h-[34px] ml-[18px]" viewBox="0 0 36 34"><path d="M0 2Q0 0 2 0H11L15 4H33V10H0z" fill="#dc9a00"/><path d="M0 7H11L15 3H34Q36 3 36 5V33H0z" fill="url(#folG)"/><path d="M6 33V26Q6 22 10 22H26Q30 22 30 26V33z" fill="#0f70c4"/><path d="M11 28H25" stroke="#0a4c8c" stroke-width="1.800"/></svg>
  <div class="w-[34px] h-[60px] ml-[31px] flex flex-col items-center pt-[11px]">
    <svg class="w-[34px] h-9 shrink-0" viewBox="0 0 34 36"><path d="M20 1Q25 5 26 10L29 7Q34 14 34 20Q33 35 17 35.500Q1 34 0 20Q0 11 4 6L7 11Q9 9 14 9Q15 4 20 1z" fill="url(#foxG)"/><circle cx="18" cy="19" r="8" fill="#7b3fe4"/><path d="M4 12Q10 9 15 13L19 14Q16 18 12 18Q9 22 14 26Q20 28 25 24Q20 33 11 28Q5 22 4 12z" fill="#ff8a1a"/></svg>
    <i class="w-[9px] h-[5px] mt-[6px] rounded-full bg-[#999] shrink-0"></i>
  </div>
  <svg class="w-9 h-[35px] ml-[31px]" viewBox="0 0 36 35"><path d="M9 7V1.500H27V7" fill="none" stroke="#1fa4e8" stroke-width="2"/><path d="M0 4H36V31Q36 35 32 35H4Q0 35 0 31z" fill="#f2f2f2"/><path d="M10 12H17.300V19H10z" fill="#f25022"/><path d="M18.500 12H26V19H18.500z" fill="#7fba00"/><path d="M10 20H17.300V27H10z" fill="#00a4ef"/><path d="M18.500 20H26V27H18.500z" fill="#ffb900"/></svg>
  <svg class="w-9 h-9 ml-[30px]" viewBox="0 0 36 36"><rect width="36" height="36" fill="#1e3fb0"/><path d="M13 8L10 27L24 28V26H15z" fill="#0b3a55"/><text x="11.500" y="27" font-family="Noto Sans" font-weight="700" font-size="27" fill="#fff">L</text></svg>
  <svg class="w-[36px] h-[34px] ml-[30px]" viewBox="0 0 36 34"><circle cx="31" cy="9" r="4" fill="#5059c9"/><path d="M24 14H35V24Q35 30 28 30z" fill="#5059c9"/><circle cx="19" cy="6" r="5.500" fill="#7b83eb"/><path d="M11 13H28V25Q27 33 19.500 33T11 25z" fill="#7b83eb"/><rect y="8" width="18" height="18" rx="2" fill="#4b53bc"/><path d="M4.500 13H13.500M9 13V22" stroke="#fff" stroke-width="2.300"/></svg>
  <svg class="w-9 h-9 ml-[30px]" viewBox="0 0 36 36"><circle cx="18" cy="18" r="18" fill="#5865f2"/><path d="M13 10.500Q18 9 23 10.500Q27 11 28 16Q30 21 29 25Q26 28 23.500 27L22 25Q18 26 14 25L12.500 27Q10 28 7 25Q6 21 8 16Q9 11 13 10.500z" fill="#fff"/><circle cx="14.500" cy="18.500" r="2.300" fill="#5865f2"/><circle cx="21.500" cy="18.500" r="2.300" fill="#5865f2"/></svg>
  <svg class="w-[34px] h-9 ml-[31px]"><use href="#fusion"/></svg>
  <div class="w-[60px] h-[60px] ml-[19px] rounded-md bg-[#2e2e2e] border border-[#383838] flex flex-col items-center pt-[10px]">
    <svg class="w-[34px] h-9 shrink-0"><use href="#fusion"/></svg>
    <i class="w-6 h-[5px] mt-[6px] rounded-full bg-[#4cc2ff] shrink-0"></i>
  </div>
  <svg class="w-4 h-[11px] ml-[60px]" viewBox="0 0 16 11"><path d="M1 10L8 2L15 10" stroke="#fff" stroke-width="2" fill="none"/></svg>
  <svg class="w-6 h-[18px] ml-7" viewBox="0 0 24 18"><path d="M6 8Q8 0 14 1Q20 3 20 8Q24 9 24 13Q24 17 20 17H5Q0 17 0 12Q1 8 6 8z" fill="#bdbdbd"/><path d="M6 7Q8 0 14 1Q19 3 19 8L14 10z" fill="#8d8d8d"/><path d="M1 14Q8 10 14 10Q17 8 20 8Q24 9 24 13Q24 17 20 17H5Q2 17 1 14z" fill="#fff"/></svg>
  <span class="ml-[30px] w-[60px] pb-0.5 tracking-[0.1px]">IND</span>
  <svg class="w-6 h-[18px] mb-0.5" viewBox="0 0 24 18" fill="none" stroke="#fff" stroke-width="1.700"><path d="M1 7Q12 -4.500 23 7M4.500 10.500Q12 2.500 19.500 10.500M8 13.500Q12 9.500 16 13.500"/><circle cx="12" cy="16" r="1" fill="#fff"/></svg>
  <svg class="w-6 h-5 ml-3 mb-0.5" viewBox="0 0 24 20" fill="none" stroke="#fff" stroke-width="1.600"><path d="M1 7H5L11 2V18L5 13H1zM14 7Q16 10 14 13M17 4Q21 10 17 16M20 1.500Q26 10 20 18.500"/></svg>
  <svg class="w-6 h-5 ml-3 mb-[3px]" viewBox="0 0 24 20"><path d="M9 4H19Q21 4 21 6V16Q21 18 19 18H5Q3 18 3 16V12" fill="none" stroke="#fff" stroke-width="1.800"/><path d="M9 6.500H18.500V15.500H5.500V12z" fill="#fff"/><path d="M22 8.500H24V13.500H22z" fill="#fff"/><path d="M4 0L0 8H3L2 13L8 5H5L7 0z" fill="#fff"/></svg>
  <div class="w-[118px] text-right leading-6 pb-[3px]"><div>08:19</div><div class="tracking-[0.2px]">21/11/2023</div></div>
  <svg class="w-5 h-[24px] ml-[13px]" viewBox="0 0 20 24" fill="#98e8ff"><path d="M10 0Q17 0 17.500 7V13L20 18V19.500H0V18L2.500 13V7Q3 0 10 0zM6.500 21H13.500Q13 24 10 24T6.500 21z"/></svg>
</footer>

<script>
const G='#3ebd93', R='#d33b3d', T='#a0a0a0';
let s='';
const wire=d=>s+=`<path d="${d}" fill="none" stroke="${G}"/>`;
const red=d=>s+=`<path d="${d}" fill="none" stroke="${R}"/>`;
const dot=(x,y)=>s+=`<circle cx="${x}" cy="${y}" r="3.500" fill="${G}"/>`;
const txt=(x,y,t,size=11.6,a='start',c=T,w)=>s+=`<text x="${x}" y="${y}" font-size="${size}" text-anchor="${a}" fill="${c}"${w?` textLength="${w}" lengthAdjust="spacingAndGlyphs"`:''}>${t}</text>`;
const cross=(x,y,c=T,r=2.5)=>s+=`<path d="M${x-r} ${y}H${x+r}M${x} ${y-r}V${y+r}" stroke="${c}"/>`;

// nets
wire('M628 513.5H864.5M930.5 487.5V500.500H864.5V683.5H931M864.5 670.5H931');
wire('M628 553.5H1048.5V592.5H1218.5V605.5H1323.5V683.5H1284.5V697.5');
wire('M746.5 553.5V644.5H931M930.5 644.5V657.5M930.5 461.5V474.5');
wire('M931 396.5H772.5V618.5H931M931 409.5H785.5V592.5H931M931 422.5H798.5V579.5H931M931 435.5H811.5V513.5');
wire('M1035 396.5H1048.5V370.5H890.5V605.5H931M1035 579.5H1048.5');
[[422.5,1113.5,513.5],[435.5,1100.5,527.5],[448.5,1087.5,540.5],[461.5,1074.5,553.5],[474.5,1061.5,566.5]].forEach(([a,x,b])=>wire(`M1035 ${a}H${x}V${b}H1127M1179 ${b}H1232`));
wire('M1035 487.5H1126.5V474.5H1180M1231 474.5H1323.5V513.5H1310M1035 500.500H1140.5V487.5H1180M1231 487.5H1310.5V527.5H1310');
wire('M1310 553.5H1336.5V801.5H916.5V683.5M1310 566.5H1336.5');
[[605.5,1126.5,644.5],[618.5,1113.5,657.5],[631.5,1100.5,670.5],[644.5,1087.5,683.5],[657.5,1074.5,697.5]].forEach(([a,x,b])=>wire(`M1035 ${a}H${x}V${b}H1140M1192 ${b}H1206`));
wire('M1035 670.5H1061.5V736.5H1140M1192 736.5H1297.5V644.5H1284M1035 683.5H1048.5V749.5H1140M1192 749.5H1310.5V657.5H1284');

// USB connector J1
s+=`<rect x="536.5" y="461.5" width="78" height="105" fill="none" stroke="${R}"/>`;
[474.5,487.5,513.5,527.5,540.5,553.5].forEach(y=>red(`M614.5 ${y}H628.5`));
txt(542,454,'0480371000',12.5,'start',T,69.5); cross(575,449);
txt(569,584,'J1',12.5); cross(576,579);
txt(557,479,'SHIELD2',11.6,'start',T,45); txt(557,492,'SHIELD1',11.6,'start',T,45);
txt(617,473,'SH2',11.6,'start',T,21.5); txt(617,486,'SH1',11.6,'start',T,21.5);
txt(604,518,'GND',11.3,'end'); txt(603,531,'D+',11.3,'end'); txt(603,544,'D-',11.3,'end'); txt(603,557,'VCC',11.3,'end');
[['4',512],['3',525],['2',538],['1',551]].forEach(([n,y])=>txt(617,y,n));
red('M543 513.5H578M551 506.500H558L564.500 513.5L555.500 521.500H548M575.500 511V516');
s+=`<path d="M544 503H551V510H544zM542 513.500L545 511V516.500z" fill="${R}"/><circle cx="547.500" cy="521.500" r="2.700" fill="${R}"/><circle cx="570.500" cy="513.500" r="2.700" fill="${R}"/>`;

// decoder ICs
function ic(o,name){
  s+=`<rect x="943.5" y="${383.5+o}" width="78" height="${o?131:130}" fill="none" stroke="${R}"/>`;
  [[396.5,'7','IA'],[409.5,'1','IB'],[422.5,'2','IC'],[435.5,'6','ID'],[461.5,'3','LT'],[474.5,'4','BL'],[487.5,'5','LE'],[500.500,'8','VSS']].forEach(([y,n,l])=>{
    y+=o; red(`M931 ${y}H943`); txt(941.5,y-2.5,n,11.6,'end'); txt(955,y+3.5,l,11.6,'start',T,l=='VSS'?21.5:0);
    if('LTBLLE'.includes(l)) s+=`<path d="M955 ${y-5}H968" stroke="${T}"/>`;
  });
  [[396.5,'16','VDD'],[422.5,'13','A'],[435.5,'12','B'],[448.5,'11','C'],[461.5,'10','D'],[474.5,'9','E'],[487.5,'15','F'],[500.500,'14','G']].forEach(([y,n,l])=>{
    y+=o; red(`M1022 ${y}H1035`); txt(1024,y-2.5,n,11.6); txt(1010,y+(l=='VDD'?3.5:4.5),l,11.3,'end');
  });
  txt(974,378+o,name,12.5,'start',T,18.500); cross(982.5,373.500+o);
  txt(943.5,528+o,'CD4511_SOIC',12.5,'start',T,81); cross(982.5,524+o);
  cross(982.5,448.5+o,R,3);
}
ic(0,'IC1'); ic(183,'IC2');

// resistors
function res(cx,y,n){
  red(`M${cx-26} ${y}H${cx-13}M${cx+13} ${y}H${cx+26}`);
  s+=`<rect x="${cx-13}" y="${y-4}" width="26" height="9" fill="none" stroke="${R}"/>`;
  cross(cx,y,R,3);
  txt(cx+1.5,y-9,n,12.5,'middle'); cross(cx+1,y-13);
  txt(cx+1.500,y+17.3,'220 ohm',12.5,'middle',T,48); cross(cx+1,y+13);
}
res(1205.5,474.5,'R6'); res(1205.5,487.5,'R7');
[513.5,527.5,540.5,553.5,566.5].forEach((y,i)=>res(1153.5,y,'R'+(i+1)));
[644.5,657.5,670.5,683.5,697.5].forEach((y,i)=>res(1166.5,y,'R'+(i+8)));
res(1166.5,736.5,'R13'); res(1166.5,749.5,'R14');

// seven-segment displays
function seg(dx,dy,name,val,k){
  s+=`<g transform="translate(${dx} ${dy})">`;
  ['a','b','c','d','e'].forEach((l,i)=>{const y=[513.5,527.5,540.5,553.5,566.5][i]; red(`M1232 ${y}H1245M1236 ${y-2.5}H1243M1238.500 ${y-3}V${y+2}`); txt(1238,y-1,l,9.5,'start',R);});
  ['f','g','P',k,k].forEach((l,i)=>{const y=[513.5,527.5,540.5,553.5,566.5][i]; red(`M1298 ${y}H1311`); txt(1299,y-1.5,l,9.5,'start',R);});
  s+=`<rect x="1245.5" y="500.5" width="52" height="79" fill="none" stroke="${R}" stroke-width="3.200"/>
  <g fill="${R}"><path d="M1256 509H1289V514H1256zM1257 538H1284V543H1257zM1251 566H1284V571H1251zM1253.500 514H1258L1255.500 538H1251zM1287.500 514H1292L1288.500 538H1284zM1250.700 540H1255.500L1252.800 566H1248zM1284.300 540H1289L1286.500 566H1282z"/><circle cx="1291" cy="568.700" r="2.700"/></g>`;
  txt(1271.5,495,name,12.5,'middle'); cross(1271.5,490.5);
  txt(1271.5,596,val,12.5,'middle',T,53); cross(1271.5,592);
  s+='</g>';
}
seg(0,0,'DS1','7SEG-CK','K'); seg(-26,131,'DS2','7SEG-CA','A');

[[746.5,553.5],[772.5,513.5],[785.5,513.5],[798.5,513.5],[811.5,513.5],[864.5,513.5],[890.5,553.5],[930.5,500.500],[1048.5,579.5],[930.5,644.5],[864.5,670.5],[916.5,683.5],[1336.5,566.5],[1284.5,683.5]].forEach(p=>dot(...p));
// crosshair cursor
s+=`<path d="M298 867H328M313 852V882" stroke="#000" stroke-width="2" stroke-dasharray="2 2"/>`;
document.getElementById('sheet').innerHTML=s;
</script>
</body>
</html>
